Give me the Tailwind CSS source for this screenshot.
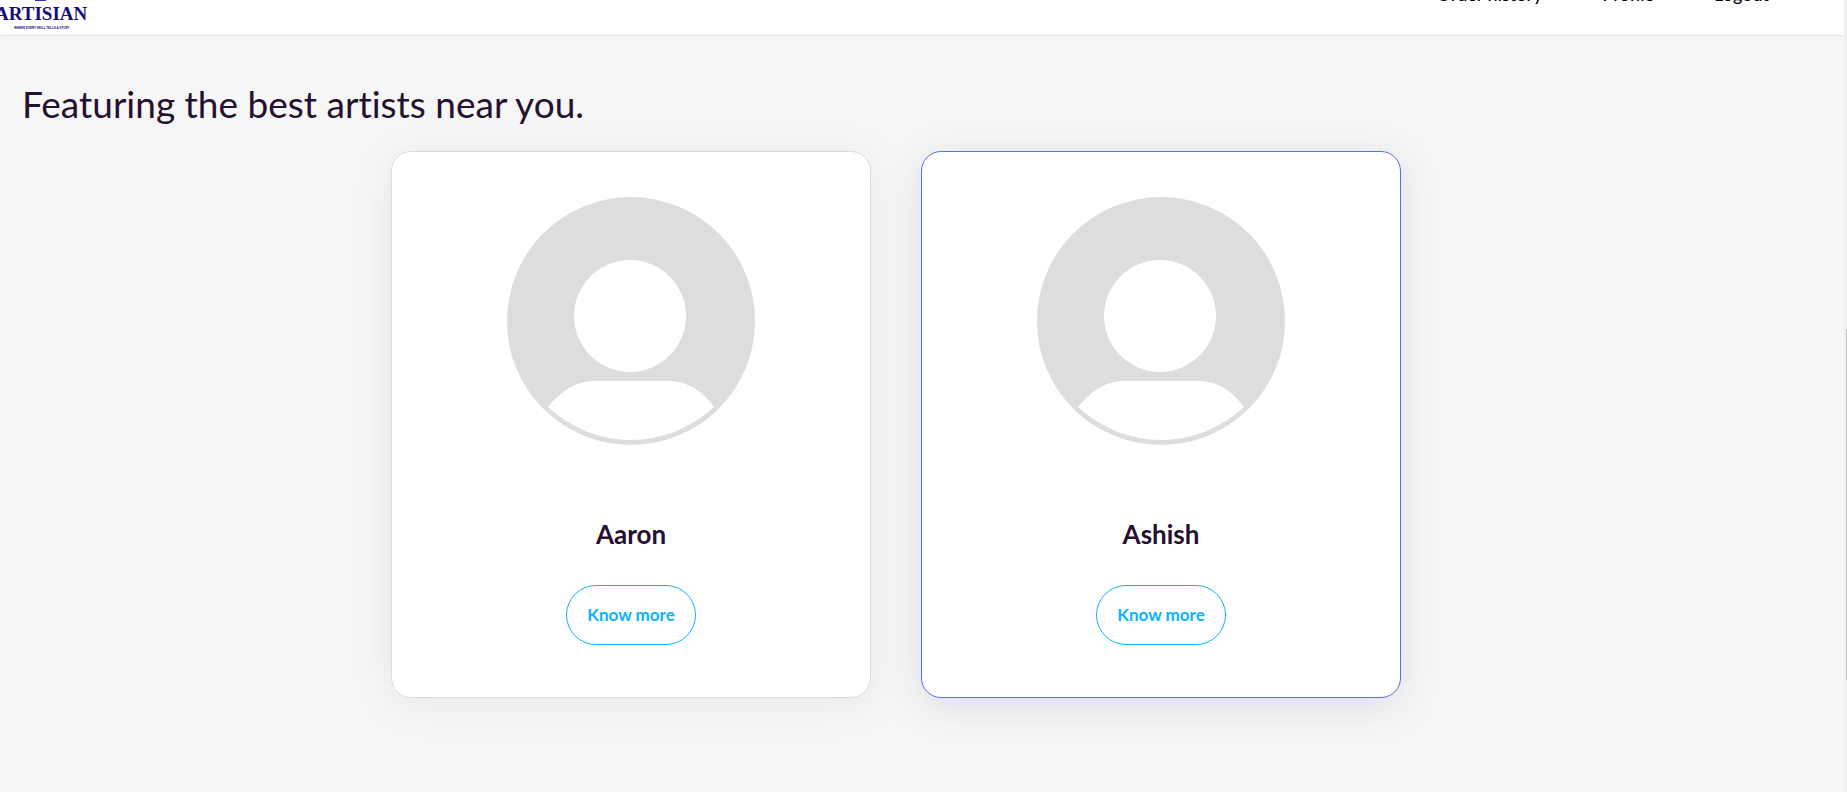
<!DOCTYPE html>
<html lang="en">
<head>
<meta charset="utf-8">
<meta name="viewport" content="width=device-width, initial-scale=1">
<title>Artisian</title>
<script src="https://cdn.jsdelivr.net/npm/@tailwindcss/browser@4"></script>
</head>
<body class="flex h-screen overflow-hidden bg-[#f6f6f6] font-['Lato',sans-serif] text-[#26102f] [font-variant-ligatures:none]">
<div class="min-w-0 flex-1 overflow-hidden">
  <header class="-mt-11 flex h-20 items-center justify-between border-b border-[#e4e4e4] bg-white pr-[75px] pb-[2px]">
    <a href="#" aria-label="Artisian home" class="self-end">
      <svg class="block h-[76px] w-[100px]" viewBox="0 -43 100 76" fill="#1b0c7c">
        <path d="M35 -20h11V1H35z" fill="#3d3294"/>
        <text x="-5" y="20" font-family="Liberation Serif" font-weight="700" font-size="19">ARTISIAN</text>
        <text x="14" y="29" font-family="Liberation Sans" font-weight="700" font-size="3">WHERE EVERY SKILL TELLS A STORY</text>
      </svg>
    </a>
    <nav class="flex gap-[60px] text-[18px] font-medium text-black">
      <a href="#">Order history</a>
      <a href="#">Profile</a>
      <a href="#">Logout</a>
    </nav>
  </header>
  <main>
    <h1 class="pt-[43px] pl-[22px] text-[37px] leading-[50px]">Featuring the best artists near you.</h1>
    <section class="mt-[22px] flex justify-center gap-[50px] pr-[52px]">
      <article class="flex w-[480px] flex-col items-center rounded-[20px] border border-[#dadcdd] bg-white pt-11 pb-[52px] shadow-[0_6px_40px_rgba(60,90,110,0.09)]">
        <svg class="size-[250px]" viewBox="0 0 250 250" role="img" aria-label="Aaron">
          <circle cx="125" cy="125" r="124" fill="#ddd"/>
          <circle cx="124" cy="120" r="56" fill="#fff"/>
          <path d="M42 211C55 195 69 185 90 185h71C182 185 196 195 208 211Q171 244 125 244Q79 244 42 211Z" fill="#fff"/>
        </svg>
        <h2 class="mt-[68px] text-[26px] leading-10 font-bold">Aaron</h2>
        <button class="mt-[31px] h-[60px] rounded-full border border-[#0bb3ff] px-5 text-[17px] font-bold text-[#0bb3ff]">Know more</button>
      </article>
      <article class="flex w-[480px] flex-col items-center rounded-[20px] border border-[#5a6ee6] bg-white pt-11 pb-[52px] shadow-[0_8px_40px_rgba(40,60,100,0.13)]">
        <svg class="size-[250px]" viewBox="0 0 250 250" role="img" aria-label="Ashish">
          <circle cx="125" cy="125" r="124" fill="#ddd"/>
          <circle cx="124" cy="120" r="56" fill="#fff"/>
          <path d="M42 211C55 195 69 185 90 185h71C182 185 196 195 208 211Q171 244 125 244Q79 244 42 211Z" fill="#fff"/>
        </svg>
        <h2 class="mt-[68px] text-[26px] leading-10 font-bold">Ashish</h2>
        <button class="mt-[31px] h-[60px] rounded-full border border-[#0bb3ff] px-5 text-[17px] font-bold text-[#0bb3ff]">Know more</button>
      </article>
    </section>
  </main>
</div>
<!-- Scrollbar track and thumb -->
<div class="flex w-[3px] flex-col items-end bg-[#f0f0f0] pt-[329px]" aria-hidden="true">
  <div class="h-[351px] w-px bg-[#c1c1c1]"></div>
</div>
</body>
</html>
